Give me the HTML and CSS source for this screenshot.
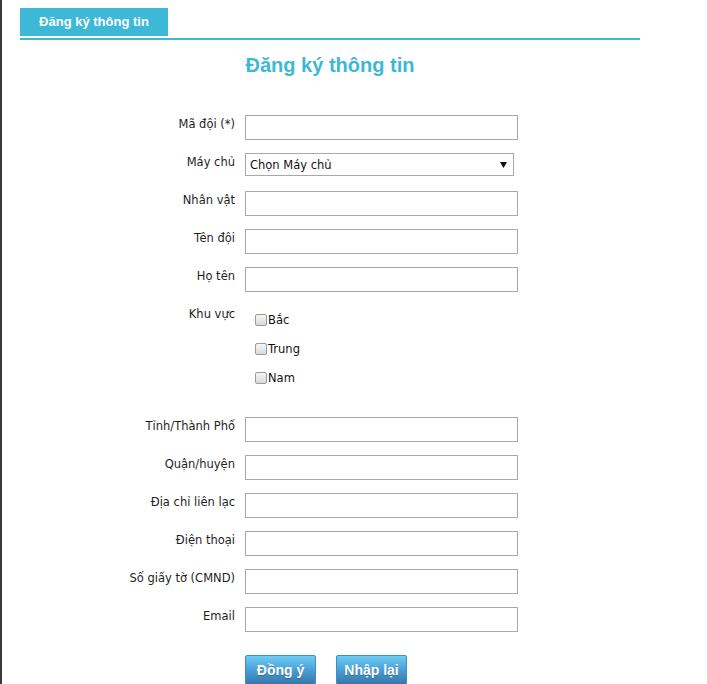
FILE: index.html
```html
<!DOCTYPE html>
<html lang="vi">
<head>
<meta charset="utf-8">
<title>Đăng ký thông tin</title>
<link rel="stylesheet" href="styles.css">
</head>
<body>
<div class="page">
  <div class="tabs"><div class="tab">Đăng ký thông tin</div></div>
  <h1 class="title">Đăng ký thông tin</h1>
  <form class="form">
    <div class="row"><label class="lbl">Mã đội (*)</label><input class="field" type="text"></div>
    <div class="row row-select"><label class="lbl">Máy chủ</label>
      <select class="select"><option>Chọn Máy chủ</option></select>
    </div>
    <div class="row"><label class="lbl">Nhân vật</label><input class="field" type="text"></div>
    <div class="row"><label class="lbl">Tên đội</label><input class="field" type="text"></div>
    <div class="row"><label class="lbl">Họ tên</label><input class="field" type="text"></div>
    <div class="row"><label class="lbl">Khu vực</label>
      <div class="checks">
        <label class="check"><input type="checkbox" class="box">Bắc</label>
        <label class="check"><input type="checkbox" class="box">Trung</label>
        <label class="check"><input type="checkbox" class="box">Nam</label>
      </div>
    </div>
    <div class="row"><label class="lbl">Tỉnh/Thành Phố</label><input class="field" type="text"></div>
    <div class="row"><label class="lbl">Quận/huyện</label><input class="field" type="text"></div>
    <div class="row"><label class="lbl">Địa chỉ liên lạc</label><input class="field" type="text"></div>
    <div class="row"><label class="lbl">Điện thoại</label><input class="field" type="text"></div>
    <div class="row"><label class="lbl">Số giấy tờ (CMND)</label><input class="field" type="text"></div>
    <div class="row"><label class="lbl">Email</label><input class="field" type="text"></div>
    <div class="row actions-row"><span></span>
      <div class="actions">
        <button type="button" class="btn">Đồng ý</button>
        <button type="reset" class="btn">Nhập lại</button>
      </div>
    </div>
  </form>
</div>
</body>
</html>
```
FILE: styles.css
```css
html, body {
  margin: 0;
  padding: 0;
}
body {
  border-left: 2px solid #3a3a3a;
  min-height: 100vh;
  background: #fff;
  font-family: "DejaVu Sans", Verdana, sans-serif;
  color: #222;
}
.page {
  width: 620px;
  margin-left: 18px;
  padding-top: 8px;
  padding-bottom: 40px;
}
.tabs {
  display: flex;
  padding-bottom: 2px;
  border-bottom: 2px solid #3db8d6;
}
.tab {
  width: 148px;
  height: 28px;
  background: #3db8d6;
  color: #fff;
  font: bold 13px/28px "Liberation Sans", Arial, sans-serif;
  text-align: center;
}
.title {
  margin: 13px 0 38px;
  font: bold 20px/24px "Liberation Sans", Arial, sans-serif;
  color: #3db8d6;
  text-align: center;
}
.form {
  display: flex;
  flex-direction: column;
  gap: 13px;
}
.row {
  display: grid;
  grid-template-columns: 215px 273px;
  column-gap: 10px;
  align-items: start;
}
.lbl {
  text-align: right;
  padding-top: 2px;
  font-size: 11.5px;
  line-height: 15px;
  color: #1e1e1e;
}
.field {
  box-sizing: border-box;
  width: 273px;
  height: 25px;
  margin: 0;
  border: 1px solid #a9a9a9;
  background: #fff;
  padding: 2px 4px;
  font: 11.5px "DejaVu Sans", sans-serif;
}
.row-select {
  height: 25px;
}
.select {
  box-sizing: border-box;
  width: 269px;
  height: 23px;
  margin: 0;
  border: 1px solid #a9a9a9;
  border-radius: 0;
  padding: 0 4px;
  font: 11.5px "DejaVu Sans", sans-serif;
  color: #111;
  -webkit-appearance: none;
  appearance: none;
  background: #fff url("data:image/svg+xml,%3Csvg xmlns='http://www.w3.org/2000/svg' width='7' height='6'%3E%3Cpath d='M0 0h7L3.5 6z' fill='%23111'/%3E%3C/svg%3E") no-repeat right 6px center;
}
.checks {
  display: flex;
  flex-direction: column;
  padding-bottom: 12px;
}
.check {
  display: flex;
  align-items: center;
  height: 29px;
  padding-left: 10px;
  font-size: 11.5px;
  color: #111;
}
.box {
  -webkit-appearance: none;
  appearance: none;
  box-sizing: border-box;
  width: 12px;
  height: 12px;
  margin: 0 1px 0 0;
  border: 1px solid #9a9a9a;
  border-radius: 2px;
  background: linear-gradient(#f6f6f6, #d9d9d9);
}
.actions-row {
  margin-top: 10px;
}
.actions {
  display: flex;
  gap: 20px;
}
.btn {
  box-sizing: border-box;
  width: 71px;
  height: 30px;
  margin: 0;
  padding: 0;
  border: 1px solid #3d8ec6;
  border-radius: 2px;
  background: linear-gradient(#6ccdf6, #4a9fd6 50%, #3677ad);
  color: #fff;
  font: bold 14px "Liberation Sans", Arial, sans-serif;
  text-shadow: 0 1px 1px rgba(0, 0, 0, 0.25);
}
```
